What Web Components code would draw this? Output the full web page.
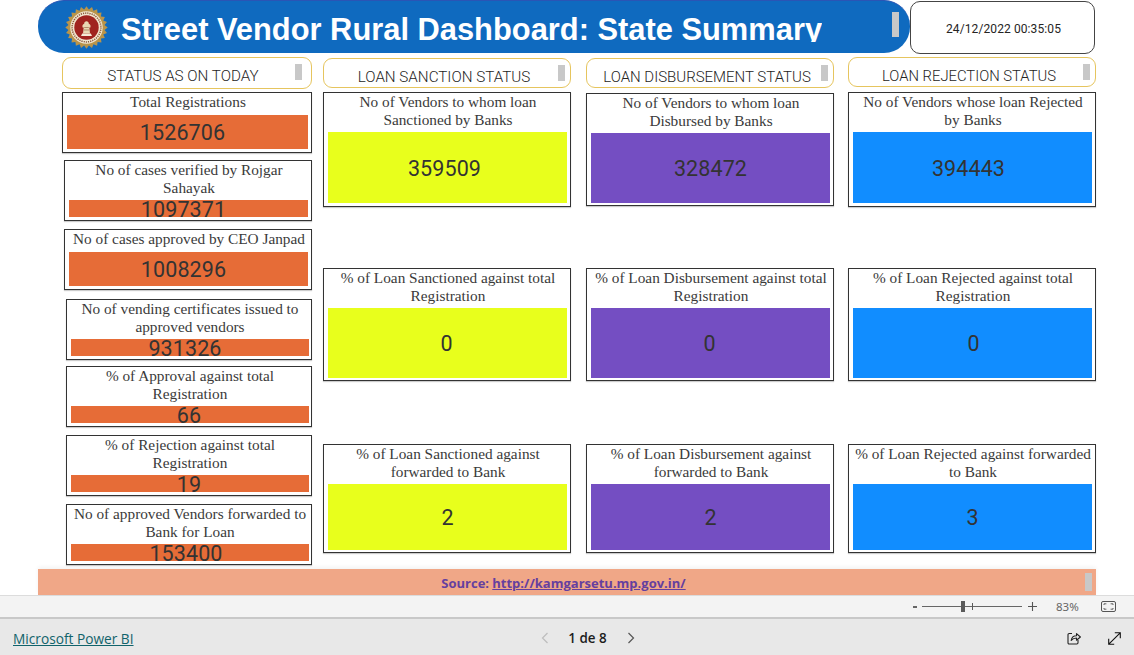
<!DOCTYPE html>
<html lang="en"><head><meta charset="utf-8"><title>Street Vendor Rural Dashboard</title>
<style>
html,body{margin:0;padding:0;background:#fff;overflow:hidden}
body{width:1134px;height:655px;font-family:"Liberation Serif",serif}
</style></head><body>
<sv-app>
  <sv-header slot="header">
    <sv-banner>Street Vendor Rural Dashboard: State Summary</sv-banner>
    <sv-clock>24/12/2022 00:35:05</sv-clock>
  </sv-header>

  <sv-column style="width:250px">
    <sv-pill style="margin-top:3px;height:32px;font-size:15.2px;padding-right:8px" thumb="232">STATUS AS ON TODAY</sv-pill>
    <sv-card color="#e66c37" fill="34" value="1526706" dx="-5" style="margin-top:3px;height:61px">Total Registrations</sv-card>
    <sv-card color="#e66c37" fill="17" value="1097371" dx="-5" style="margin:7px 0 0 2px;height:61px">No of cases verified by Rojgar Sahayak</sv-card>
    <sv-card color="#e66c37" fill="34" value="1008296" dx="-5" style="margin:8px 0 0 2px;height:61px">No of cases approved by CEO Janpad</sv-card>
    <sv-card color="#e66c37" fill="17" value="931326" dx="-5" inset="2" style="margin:9px 0 0 4px;height:61px">No of vending certificates issued to approved vendors</sv-card>
    <sv-card color="#e66c37" fill="17" value="66" dx="-1" inset="2" style="margin:6px 0 0 4px;height:61px">% of Approval against total Registration</sv-card>
    <sv-card color="#e66c37" fill="17" value="19" dx="-1" inset="2" style="margin:8px 0 0 4px;height:61px">% of Rejection against total Registration</sv-card>
    <sv-card color="#e66c37" fill="17" value="153400" dx="-4" inset="2" style="margin:8px 0 0 4px;height:61px">No of approved Vendors forwarded to Bank for Loan</sv-card>
  </sv-column>

  <sv-column style="width:248px;margin-left:11px">
    <sv-pill style="margin-top:4px;height:30px;padding-top:8px;font-size:15.2px" thumb="234">LOAN SANCTION STATUS</sv-pill>
    <sv-card color="#e8ff1c" fill="71" big value="359509" dx="-3" style="margin-top:4px;height:115px">No of Vendors to whom loan Sanctioned by Banks</sv-card>
    <sv-card color="#e8ff1c" fill="70" big value="0" dx="-1" style="margin-top:61px;height:113px">% of Loan Sanctioned against total Registration</sv-card>
    <sv-card color="#e8ff1c" fill="66" big value="2" style="margin-top:63px;height:109px">% of Loan Sanctioned against forwarded to Bank</sv-card>
  </sv-column>

  <sv-column style="width:248px;margin-left:15px">
    <sv-pill style="margin-top:4px;height:30px;padding-top:8px" thumb="234">LOAN DISBURSEMENT STATUS</sv-pill>
    <sv-card color="#744ec2" fill="70" big value="328472" style="margin-top:5px;height:113px">No of Vendors to whom loan Disbursed by Banks</sv-card>
    <sv-card color="#744ec2" fill="70" big value="0" dx="-1" style="margin-top:62px;height:113px">% of Loan Disbursement against total Registration</sv-card>
    <sv-card color="#744ec2" fill="66" big value="2" style="margin-top:63px;height:109px">% of Loan Disbursement against forwarded to Bank</sv-card>
  </sv-column>

  <sv-column style="width:248px;margin-left:14px">
    <sv-pill style="margin-top:3px;height:30px;padding-top:8px;font-size:14.8px" thumb="234">LOAN REJECTION STATUS</sv-pill>
    <sv-card color="#118dff" fill="71" big value="394443" dx="-4" style="margin-top:5px;height:115px">No of Vendors whose loan Rejected<br>by Banks</sv-card>
    <sv-card color="#118dff" fill="70" big value="0" dx="1" style="margin-top:61px;height:113px">% of Loan Rejected against total Registration</sv-card>
    <sv-card color="#118dff" fill="66" big value="3" style="margin-top:63px;height:109px">% of Loan Rejected against forwarded to Bank</sv-card>
  </sv-column>

  <sv-source slot="source">Source: <a href="http://kamgarsetu.mp.gov.in/">http://kamgarsetu.mp.gov.in/</a></sv-source>
  <sv-zoombar slot="zoom"></sv-zoombar>
  <sv-footer slot="footer"></sv-footer>
</sv-app>
<script>
function def(name, css, html, setup){
  customElements.define(name, class extends HTMLElement{
    constructor(){super();this.attachShadow({mode:'open'}).innerHTML='<style>'+css+'</style>'+html;}
    connectedCallback(){ if(setup) setup(this, this.shadowRoot); }
  });
}
def('sv-app',
 `:host{display:flex;flex-direction:column;width:1134px;height:655px}
  .main{height:569px;display:flex;flex-direction:column;flex:none}
  .cols{display:flex;padding-left:62px}`,
 `<div class="main"><slot name="header"></slot><div class="cols"><slot></slot></div></div>
  <slot name="source"></slot><slot name="zoom"></slot><slot name="footer"></slot>`);
def('sv-header',
 `:host{display:flex;height:54px;padding-left:38px;flex:none}`,
 `<slot></slot>`);
def('sv-banner',
 `:host{display:flex;position:relative;box-sizing:border-box;width:872px;height:53px;background:#0f6abf;border-top:1px solid #2a55b5;border-radius:26px;align-items:flex-start;color:#fff;font:700 30.85px/42px "Liberation Sans",Arial,sans-serif}
  svg{flex:none;margin:5px 0 0 27px;width:43px;height:43px}
  .t{margin-left:13px;height:41px;padding-top:8px;box-sizing:border-box;overflow:hidden;white-space:nowrap}
  .thumb{position:absolute;left:854px;top:11px;width:7px;height:25px;background:#c8c8c8}`,
 `<svg viewBox="0 0 43 43" aria-hidden="true">
   <polygon class="star" fill="#b9944a"></polygon>
   <circle cx="21.5" cy="21.5" r="16.2" fill="#f2e6cf"/>
   <circle cx="21.5" cy="21.5" r="14.4" fill="none" stroke="#8a5a3a" stroke-width="1.5" stroke-dasharray="1.2 1"/>
   <circle cx="21.5" cy="21.5" r="12.2" fill="#a0241f"/>
   <path d="M16 30h11l-1.2-2.6h-8.6z" fill="#f4ead6"/>
   <path d="M18 27.4h7l-.7-6h1.1c.6-1.8-.3-3.4-1.6-3.6.2-1.6-1-2.6-2.3-2.6s-2.5 1-2.3 2.6c-1.3.2-2.2 1.8-1.6 3.6h1.1z" fill="#e9d9b4"/>
   <path d="M19 24h5M19.2 21.5h4.6" stroke="#8a5a3a" stroke-width=".6"/>
  </svg><div class="t"><slot></slot></div><i class="thumb"></i>`,
 (el,sr)=>{let p=[];for(let i=0;i<48;i++){let r=i%2?18.2:21.2,a=i*Math.PI/24;p.push((21.5+r*Math.cos(a)).toFixed(2)+','+(21.5+r*Math.sin(a)).toFixed(2));}
  sr.querySelector('.star').setAttribute('points',p.join(' '));});
def('sv-clock',
 `:host{display:flex;box-sizing:border-box;width:185px;height:53px;margin-top:1px;border:1px solid #444;border-radius:10px;align-items:center;justify-content:center;font:400 12px "Roboto",sans-serif;letter-spacing:.1px;color:#252423;padding:2px 0 0 2px}`,
 `<slot></slot>`);
def('sv-column',
 `:host{display:flex;flex-direction:column;flex:none}`,
 `<slot></slot>`);
def('sv-pill',
 `:host{display:flex;position:relative;box-sizing:border-box;border:1px solid #e6c55e;border-radius:9px;align-items:center;justify-content:center;padding:6px 6px 0 0;font:300 15px/20px "Roboto",sans-serif;color:#252423;white-space:nowrap;flex:none}
  .thumb{position:absolute;top:6px;width:7px;height:16px;background:#c8c8c8}`,
 `<slot></slot><i class="thumb"></i>`,
 (el,sr)=>{sr.querySelector('.thumb').style.left=el.getAttribute('thumb')+'px';});
def('sv-card',
 `:host{display:flex;flex-direction:column;box-sizing:border-box;flex:none;border:1px solid #333;box-shadow:0 1px 1px rgba(0,0,0,.2);background:#fff}
  .l{font:15.3px/18px "Liberation Serif",serif;color:#3a3a3a;text-align:center;padding:0 1px 0 3px;flex:none}
  .f{box-sizing:border-box;margin:auto 3px 3px 4px;padding-top:2px;display:flex;align-items:center;justify-content:center;font:400 21.5px/16px "Roboto",sans-serif;letter-spacing:.1px;color:#333;flex:none}`,
 `<div class="l"><slot></slot></div><div class="f"></div>`,
 (el,sr)=>{let f=sr.querySelector('.f');f.textContent=el.getAttribute('value');f.style.background=el.getAttribute('color');f.style.height=el.getAttribute('fill')+'px';
   if(el.hasAttribute('inset'))f.style.marginRight=el.getAttribute('inset')+'px';
   if(el.hasAttribute('big')&&+el.getAttribute('fill')<71)f.style.marginBottom='2px';
   let dx=+el.getAttribute('dx')||0; if(dx<0)f.style.paddingRight=(-2*dx)+'px'; if(dx>0)f.style.paddingLeft=(2*dx)+'px';});
def('sv-source',
 `:host{display:flex;position:relative;box-sizing:border-box;width:1058px;height:26px;margin-left:38px;padding:2px 7px 0 0;background:#f0a787;align-items:center;justify-content:center;font:700 13px "Open Sans",sans-serif;color:#653f9f;flex:none;box-shadow:0 -2px 4px rgba(0,0,0,.05)}
  ::slotted(a){color:inherit;margin-left:.25em}
  .thumb{position:absolute;left:1047px;top:4px;width:7px;height:18px;background:#c8c8c8}`,
 `<slot></slot><i class="thumb"></i>`);
def('sv-zoombar',
 `:host{display:flex;box-sizing:border-box;height:24px;background:#f3f3f3;border-top:1px solid #dcdcdc;border-bottom:2px solid #c8c8c8;align-items:center;flex:none;padding-left:913px;font:11.5px "Noto Sans",sans-serif;color:#666}
  .m{width:4px;height:2px;background:#666}
  .s{position:relative;width:100px;height:1.5px;background:#666;margin-left:5px}
  .s i{position:absolute;background:#5a5a5a}
  .s .a{left:39px;top:-5px;width:4px;height:11px}
  .s .b{left:50px;top:-3px;width:1px;height:7px}
  .p{margin-left:6px;width:9px;height:9px}
  .z{margin-left:19px;width:23px}
  .fit{margin-left:22px;width:15px;height:11px}`,
 `<i class="m"></i><div class="s"><i class="a"></i><i class="b"></i></div>
  <svg class="p" viewBox="0 0 9 9"><path d="M4.5 0v9M0 4.5h9" stroke="#555" stroke-width="1.1"/></svg>
  <span class="z">83%</span>
  <svg class="fit" viewBox="0 0 15 11" fill="none" stroke="#555"><rect x=".5" y=".5" width="14" height="10" rx="1.5"/><path d="M3 4V2.8h2.4M12 4V2.8H9.6M3 7v1.2h2.4M12 7v1.2H9.6" stroke-width=".9"/></svg>`);
def('sv-footer',
 `:host{display:grid;grid-template-columns:1fr auto 1fr;height:37px;background:#e8e8e8;align-items:center;flex:none;padding-top:1px;box-sizing:border-box}
  a{margin-left:13px;justify-self:start;font:13.7px "Open Sans",sans-serif;color:#11636b;text-decoration:underline}
  .pg{display:flex;align-items:center;margin-left:42px;font:600 13.4px "Open Sans",sans-serif;color:#1c1c1c}
  .pg span{margin:0 20px 0 19px}
  .r{justify-self:end;display:flex;align-items:center}
  .r svg{display:block}`,
 `<a href="#">Microsoft Power BI</a>
  <div class="pg">
   <svg width="8" height="12" viewBox="0 0 8 12" fill="none" stroke="#bdbdbd" stroke-width="1.2"><path d="M6.5 1 1.5 6l5 5"/></svg>
   <span>1 de 8</span>
   <svg width="8" height="12" viewBox="0 0 8 12" fill="none" stroke="#555" stroke-width="1.2"><path d="M1.5 1l5 5-5 5"/></svg>
  </div>
  <div class="r">
   <svg width="14" height="14" viewBox="0 0 14 14" fill="none" stroke="#222" stroke-width="1.1"><path d="M5 2.5H2.2A1.2 1.2 0 0 0 1 3.7v8A1.2 1.2 0 0 0 2.2 13h7.6a1.2 1.2 0 0 0 1.2-1.2V9"/><path d="M4.2 9.5c.4-3 2.6-4.7 5.3-4.7V2.6L13.4 6 9.5 9.2V7C7.4 7 5.6 7.8 4.2 9.5z" stroke-linejoin="round"/></svg>
   <svg style="margin:0 13px 0 27px" width="13" height="13" viewBox="0 0 13 13" fill="none" stroke="#111" stroke-width="1.1"><path d="M.8 12.2 12.2.8M6.8.7h5.5v5.5M.7 6.8v5.5h5.5"/></svg>
  </div>`);
</script>
</body></html>
